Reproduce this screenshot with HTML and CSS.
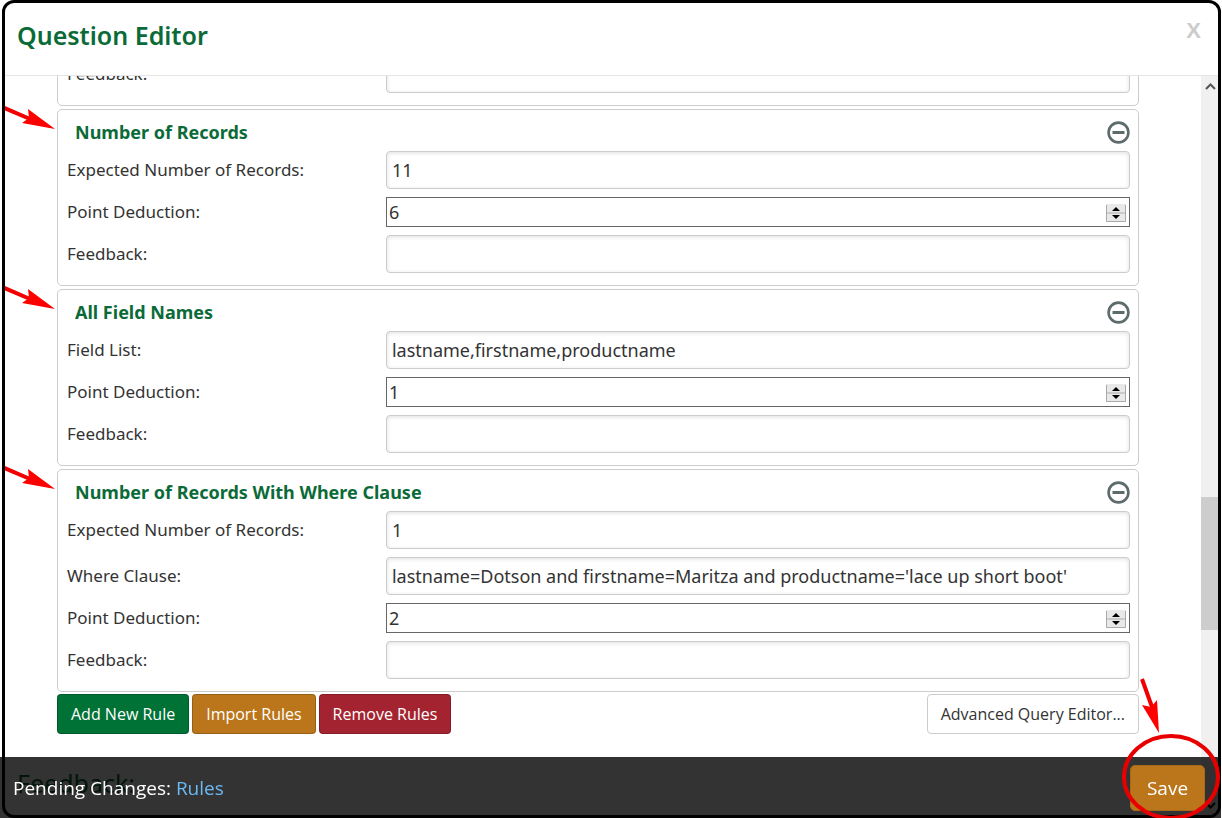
FILE: index.html
```html
<!DOCTYPE html>
<html lang="en">
<head>
    <meta charset="UTF-8">
    <meta name="viewport" content="width=device-width, initial-scale=1.0">
    <title>Question Editor</title>
    <link rel="stylesheet" href="styles.css">
</head>
<body>
    <!-- Shared shapes -->
    <svg class="defs" aria-hidden="true">
        <symbol id="minus" viewBox="0 0 24 24">
            <circle cx="12.500" cy="12.500" r="9.900" fill="none" stroke="#5d6b6c" stroke-width="2.600"/>
            <rect x="6.500" y="11" width="12" height="3" fill="#5d6b6c"/>
        </symbol>
        <symbol id="spinner" viewBox="0 0 20 18">
            <rect width="20" height="18" fill="#e9e9e9"/>
            <path d="M.5 1v16.500h19V1M0 9h20" fill="none" stroke="#aaa"/>
            <path d="M6 7h8L10 3zM6 11h8l-4 4z" fill="#000"/>
        </symbol>
        <symbol id="arrow" viewBox="0 0 56 28">
            <path d="M2 3L30 15" stroke="#f00000" stroke-width="4"/>
            <path d="M55 25L28 5l1 9-7 5z" fill="#f00"/>
        </symbol>
    </svg>

    <div class="modal">
        <header class="modal-header">
            <h1>Question Editor</h1>
            <button type="button" class="close" aria-label="Close">X</button>
        </header>

        <div class="modal-body">
            <form class="rules" id="rulesForm">
                <!-- Previous rule, scrolled out of view -->
                <section class="rule">
                    <div class="row">
                        <label for="prevFeedback">Feedback:</label>
                        <input type="text" id="prevFeedback">
                    </div>
                </section>

                <!-- Number of Records -->
                <section class="rule">
                    <svg class="arrow"><use href="#arrow"/></svg>
                    <div class="rule-title">
                        <h2>Number of Records</h2>
                        <button type="button" class="remove" aria-label="Remove rule"><svg><use href="#minus"/></svg></button>
                    </div>
                    <div class="row">
                        <label for="recordsExpected">Expected Number of Records:</label>
                        <input type="text" id="recordsExpected" value="11">
                    </div>
                    <div class="row">
                        <label for="recordsPoints">Point Deduction:</label>
                        <div class="number">
                            <input type="number" id="recordsPoints" value="6">
                            <svg><use href="#spinner"/></svg>
                        </div>
                    </div>
                    <div class="row">
                        <label for="recordsFeedback">Feedback:</label>
                        <input type="text" id="recordsFeedback">
                    </div>
                </section>

                <!-- All Field Names -->
                <section class="rule">
                    <svg class="arrow"><use href="#arrow"/></svg>
                    <div class="rule-title">
                        <h2>All Field Names</h2>
                        <button type="button" class="remove" aria-label="Remove rule"><svg><use href="#minus"/></svg></button>
                    </div>
                    <div class="row">
                        <label for="fieldList">Field List:</label>
                        <input type="text" id="fieldList" value="lastname,firstname,productname">
                    </div>
                    <div class="row">
                        <label for="fieldPoints">Point Deduction:</label>
                        <div class="number">
                            <input type="number" id="fieldPoints" value="1">
                            <svg><use href="#spinner"/></svg>
                        </div>
                    </div>
                    <div class="row">
                        <label for="fieldFeedback">Feedback:</label>
                        <input type="text" id="fieldFeedback">
                    </div>
                </section>

                <!-- Number of Records With Where Clause -->
                <section class="rule">
                    <svg class="arrow"><use href="#arrow"/></svg>
                    <div class="rule-title">
                        <h2>Number of Records With Where Clause</h2>
                        <button type="button" class="remove" aria-label="Remove rule"><svg><use href="#minus"/></svg></button>
                    </div>
                    <div class="row">
                        <label for="whereExpected">Expected Number of Records:</label>
                        <input type="text" id="whereExpected" value="1">
                    </div>
                    <div class="row">
                        <label for="whereClause">Where Clause:</label>
                        <input type="text" id="whereClause" value="lastname=Dotson and firstname=Maritza and productname='lace up short boot'">
                    </div>
                    <div class="row">
                        <label for="wherePoints">Point Deduction:</label>
                        <div class="number">
                            <input type="number" id="wherePoints" value="2">
                            <svg><use href="#spinner"/></svg>
                        </div>
                    </div>
                    <div class="row">
                        <label for="whereFeedback">Feedback:</label>
                        <input type="text" id="whereFeedback">
                    </div>
                </section>

                <div class="actions">
                    <button type="button" class="btn btn-add">Add New Rule</button>
                    <button type="button" class="btn btn-import">Import Rules</button>
                    <button type="button" class="btn btn-remove">Remove Rules</button>
                    <button type="button" class="btn btn-advanced">Advanced Query Editor...</button>
                </div>
                <h3>Feedback:</h3>
            </form>

            <div class="scrollbar" aria-hidden="true">
                <svg viewBox="0 0 17 20"><path d="M5 13l4.500-4.500L14 13" fill="none" stroke="#555" stroke-width="2"/></svg>
                <div class="space-above"></div>
                <div class="thumb"></div>
                <div class="space-below"></div>
                <svg viewBox="0 0 17 20"><path d="M5 8l4.500 4.500L14 8" fill="none" stroke="#000" stroke-width="2"/></svg>
            </div>
        </div>
    </div>

    <!-- Pending Changes Bar -->
    <footer class="pending">
        <p>Pending Changes: <a href="#rulesForm">Rules</a></p>
        <div class="save-wrap">
            <button type="submit" form="rulesForm" class="save">Save</button>
            <svg class="save-mark" viewBox="0 0 102 142">
                <ellipse cx="51" cy="100" rx="47" ry="41" fill="none" stroke="#e80000" stroke-width="4"/>
                <path d="M22 2l10 28" stroke="#f00000" stroke-width="4"/>
                <path d="M39 56L22 28l9 2 6-7z" fill="#f00"/>
            </svg>
        </div>
    </footer>
</body>
</html>
```
FILE: styles.css
```css
* {
    box-sizing: border-box;
}
body {
    margin: 0;
    font-family: "Noto Sans", "Open Sans", sans-serif;
    font-size: 17px;
    color: #333;
    background: #fff;
    overflow: hidden;
}
h1, h2, h3, p {
    margin: 0;
}
button {
    font-family: inherit;
    cursor: pointer;
}
.defs {
    position: absolute;
    width: 0;
    height: 0;
}
.modal {
    display: flex;
    flex-direction: column;
    height: 100vh;
    margin: 0 1px 0 2px;
    border: 3px solid #000;
    border-radius: 12px;
    overflow: hidden;
}
.modal-header {
    display: flex;
    justify-content: space-between;
    flex: none;
    height: 73px;
    padding: 12px 17px 0 12px;
    border-bottom: 1px solid #e5e5e5;
}
h1 {
    font-size: 25px;
    line-height: 40px;
    font-weight: 600;
    color: #0b6b38;
}
.close {
    height: 32px;
    padding: 0;
    border: 0;
    background: none;
    font: bold 22px "Liberation Sans", sans-serif;
    color: #ccc;
}
.modal-body {
    display: flex;
    flex: 1;
    min-height: 0;
}
/* anchored to the bottom, older rules run off the top */
.rules {
    display: flex;
    flex-direction: column;
    justify-content: flex-end;
    flex: 1;
    gap: 3px;
    padding: 0 62px 14px 52px;
    overflow: hidden;
}
.rule {
    position: relative;
    display: flex;
    flex-direction: column;
    flex: none;
    gap: 8px;
    padding: 0 8px 12px 9px;
    border: 1px solid #ccc;
    border-radius: 5px;
}
.rule-title {
    display: flex;
    align-items: center;
    justify-content: space-between;
    height: 33px;
    padding: 10px 0 0 8px;
}
h2 {
    font-size: 18px;
    line-height: 24px;
    font-weight: 700;
    color: #0b6b38;
}
.remove {
    width: 24px;
    height: 24px;
    padding: 0;
    border: 0;
    background: none;
}
.remove svg {
    display: block;
    width: 24px;
    height: 24px;
}
.row {
    display: grid;
    grid-template-columns: 3fr 7fr;
    align-items: center;
}
.row label {
    padding-bottom: 2px;
}
.row input {
    width: 100%;
    height: 38px;
    padding: 0 5px;
    border: 1px solid #ccc;
    border-radius: 4px;
    box-shadow: inset 0 1px 4px rgba(0, 0, 0, 0.13);
    font-family: inherit;
    font-size: 18px;
    color: #333;
}
.number {
    position: relative;
    display: flex;
}
.row .number input {
    height: 30px;
    padding: 0 2px;
    border-color: #666;
    border-radius: 0;
    box-shadow: none;
    appearance: textfield;
}
.number svg {
    position: absolute;
    right: 4px;
    top: 7px;
    width: 20px;
    height: 18px;
}
.arrow {
    position: absolute;
    left: -58px;
    top: -6px;
    width: 56px;
    height: 28px;
}
.actions {
    display: flex;
    gap: 3px;
    margin-top: -1px;
}
.btn {
    height: 40px;
    padding: 0 13px;
    border: 1px solid rgba(0, 0, 0, 0.2);
    border-radius: 4px;
    font-family: "Open Sans", sans-serif;
    font-size: 16px;
    color: #fff;
}
.btn-add {
    background: #007236;
}
.btn-import {
    background: #bb761b;
}
.btn-remove {
    background: #a32430;
}
.btn-advanced {
    margin-left: auto;
    border-color: #ccc;
    background: #fff;
    color: #333;
}
h3 {
    margin: 28px 0 0 -40px;
    font-size: 25px;
    line-height: 36px;
    font-weight: 400;
    color: #0b6b38;
}
.scrollbar {
    display: flex;
    flex-direction: column;
    width: 17px;
    background: #f0f0f0;
}
.scrollbar svg {
    width: 17px;
    height: 20px;
}
.space-above {
    flex: 401;
}
.thumb {
    flex: 133;
    background: #cdcdcd;
}
.space-below {
    flex: 165;
}
.pending {
    position: fixed;
    left: 0;
    right: 1px;
    bottom: 0;
    display: flex;
    align-items: center;
    justify-content: space-between;
    height: 61px;
    padding: 0 16px 0 13px;
    background: rgba(0, 0, 0, 0.8);
    font-family: "Open Sans", sans-serif;
    font-size: 19px;
    color: #fff;
}
.pending a {
    color: #6bb9f0;
    text-decoration: none;
}
.save-wrap {
    position: relative;
}
.save {
    width: 75px;
    height: 46px;
    border: 1px solid #a86a18;
    border-radius: 5px;
    background: #bb761b;
    font-size: 19px;
    color: #fff;
}
.save-mark {
    position: absolute;
    left: -10px;
    top: -88px;
    width: 102px;
    height: 142px;
    pointer-events: none;
}
```
